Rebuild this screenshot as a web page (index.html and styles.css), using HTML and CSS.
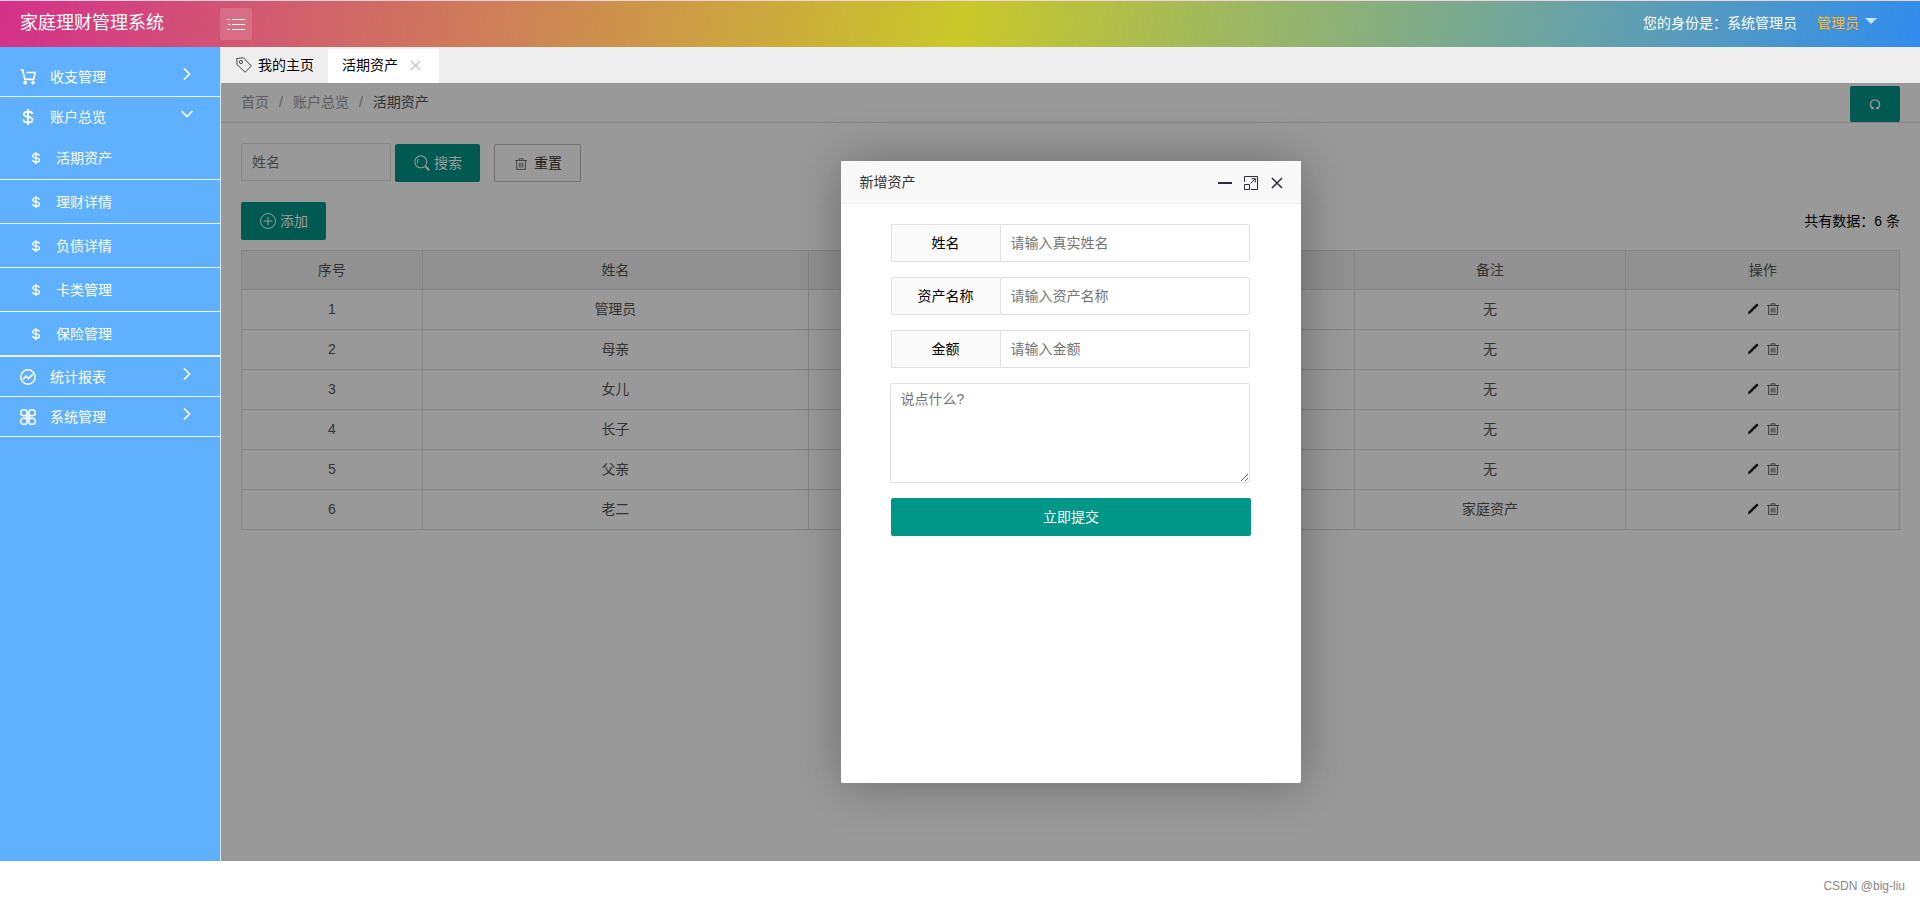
FILE: index.html
```html
<!DOCTYPE html>
<html lang="zh-CN">
<head>
<meta charset="utf-8">
<title>家庭理财管理系统</title>
<link rel="stylesheet" href="styles.css">
</head>
<body>
<svg class="sprite" aria-hidden="true">
  <symbol id="i-cart" viewBox="0 0 16 16"><path d="M0.5 1h2.2l2.2 9.400h8.800L15.200 3.500H6.500" fill="none" stroke="currentColor" stroke-width="1.700"/><circle cx="5.200" cy="13.600" r="1.900" fill="currentColor"/><circle cx="13" cy="13.600" r="1.900" fill="currentColor"/></symbol>
  <symbol id="i-dollar" viewBox="0 0 16 16"><path d="M12.4 5C12 3.200 10.400 2.500 8 2.500S3.800 3.500 3.800 5.200c0 3.800 8.800 1.600 8.800 5.500 0 1.900-1.900 2.900-4.600 2.900s-4.400-1-4.700-3M8 0v16" fill="none" stroke="currentColor" stroke-width="1.800"/></symbol>
  <symbol id="i-chart" viewBox="0 0 16 16"><circle cx="8" cy="8" r="7.200" fill="none" stroke="currentColor" stroke-width="1.500"/><path d="M3 10.500 6 7.200l2.600 2.300L13 5.200" fill="none" stroke="currentColor" stroke-width="1.700"/></symbol>
  <symbol id="i-clover" viewBox="0 0 16 16"><g fill="none" stroke="currentColor" stroke-width="1.500"><rect x=".8" y=".8" width="6.400" height="6" rx="2.800"/><rect x="8.800" y=".8" width="6.400" height="6" rx="2.800"/><rect x=".8" y="9.200" width="6.400" height="6" rx="2.800"/><rect x="8.800" y="9.200" width="6.400" height="6" rx="2.800"/></g><path d="M5.500 5.800h5v4.400h-5z" fill="currentColor" opacity=".85"/></symbol>
  <symbol id="i-right" viewBox="0 0 14 14"><path d="M4 1.500 9.500 7 4 12.500" fill="none" stroke="currentColor" stroke-width="1.700"/></symbol>
  <symbol id="i-down" viewBox="0 0 14 14"><path d="M1.500 4 7 9.500 12.500 4" fill="none" stroke="currentColor" stroke-width="1.700"/></symbol>
  <symbol id="i-list" viewBox="0 0 18 14"><path d="M5 2.500h13M5 7.500h13M5 12.500h13M0 2.500h3M1 7.500h2.500M0 12.500h3" stroke="currentColor"/></symbol>
  <symbol id="i-tag" viewBox="0 0 16 16"><path d="M.7 1.500 7.500.7l7.800 8.300-6.200 6.200L1 7.500z" fill="none" stroke="currentColor"/><circle cx="5" cy="5" r="1.600" fill="none" stroke="currentColor"/></symbol>
  <symbol id="i-close" viewBox="0 0 12 12"><path d="M1 1l10 10M11 1 1 11" stroke="currentColor" stroke-width="1.500"/></symbol>
  <symbol id="i-search" viewBox="0 0 16 16"><circle cx="6.800" cy="6.800" r="6" fill="none" stroke="currentColor" stroke-width="1.100"/><path d="M4.500 3.800a4 4 0 0 0-.8 4.500" fill="none" stroke="currentColor"/><path d="m11.500 11.500 3.700 3.700" stroke="currentColor" stroke-width="2.200"/></symbol>
  <symbol id="i-trash" viewBox="0 0 12 12"><path d="M0 2.500h12M4 2V.8h4V2M1.600 2.800v8.600h8.800V2.800M4.200 4.800v4.800M6 4.800v4.800M7.800 4.800v4.800" fill="none" stroke="currentColor" stroke-width=".9"/></symbol>
  <symbol id="i-plus" viewBox="0 0 16 16"><circle cx="8" cy="8" r="7.500" fill="none" stroke="currentColor"/><path d="M8 3.800v8.400M3.800 8h8.400" stroke="currentColor"/></symbol>
  <symbol id="i-edit" viewBox="0 0 12 12"><path d="M.8 11.200 1.500 8.500 9 1.200q1-1 1.900-.2t0 1.900L3.500 10.300z" fill="currentColor"/></symbol>
  <symbol id="i-refresh" viewBox="0 0 12 12"><path d="M3.800 10.500A4.600 4.600 0 1 1 8.200 10.500M2.300 10.500h1.900V9M9.700 10.500H7.800V9" fill="none" stroke="currentColor" stroke-width="1.400"/></symbol>
  <symbol id="i-max" viewBox="0 0 14 14"><path d="M.5 6V.5h13v13H7M.5 8.500h5v5h-5zM6.500 7.500 11 3M7.500 2.700h3.800v3.800" fill="none" stroke="currentColor"/></symbol>
</svg>

<header class="header">
  <h1 class="logo">家庭理财管理系统</h1>
  <button class="fold" type="button" aria-label="菜单"><svg class="icon-list"><use href="#i-list"/></svg></button>
  <div class="identity">您的身份是：系统管理员</div>
  <a class="account" href="#">管理员<span class="caret"></span></a>
</header>

<div class="body">
  <nav class="side">
    <a class="item" href="#"><svg class="icon16"><use href="#i-cart"/></svg><span>收支管理</span><svg class="arrow"><use href="#i-right"/></svg></a>
    <div class="group">
      <a class="item item-open" href="#"><svg class="icon16"><use href="#i-dollar"/></svg><span>账户总览</span><svg class="arrow"><use href="#i-down"/></svg></a>
      <a class="sub" href="#"><svg class="icon12"><use href="#i-dollar"/></svg><span>活期资产</span></a>
      <a class="sub" href="#"><svg class="icon12"><use href="#i-dollar"/></svg><span>理财详情</span></a>
      <a class="sub" href="#"><svg class="icon12"><use href="#i-dollar"/></svg><span>负债详情</span></a>
      <a class="sub" href="#"><svg class="icon12"><use href="#i-dollar"/></svg><span>卡类管理</span></a>
      <a class="sub" href="#"><svg class="icon12"><use href="#i-dollar"/></svg><span>保险管理</span></a>
    </div>
    <a class="item" href="#"><svg class="icon16"><use href="#i-chart"/></svg><span>统计报表</span><svg class="arrow"><use href="#i-right"/></svg></a>
    <a class="item" href="#"><svg class="icon16"><use href="#i-clover"/></svg><span>系统管理</span><svg class="arrow"><use href="#i-right"/></svg></a>
  </nav>

  <main class="main">
    <div class="tabs">
      <a class="tab" href="#"><svg class="icon16 tag"><use href="#i-tag"/></svg>我的主页</a>
      <a class="tab tab-on" href="#">活期资产<svg class="tab-close"><use href="#i-close"/></svg></a>
    </div>

    <section class="page">
      <div class="crumbs">
        <div class="trail"><a href="#">首页</a><i>/</i><a href="#">账户总览</a><i>/</i><a class="here" href="#">活期资产</a></div>
        <button class="refresh" type="button" aria-label="刷新"><svg class="icon12"><use href="#i-refresh"/></svg></button>
      </div>
      <div class="content">
        <form class="search">
          <input class="field" type="text" placeholder="姓名" aria-label="姓名">
          <button class="btn" type="button"><svg class="icon16"><use href="#i-search"/></svg>搜索</button>
          <button class="btn btn-plain" type="button"><svg class="icon12"><use href="#i-trash"/></svg>重置</button>
        </form>
        <div class="toolbar">
          <button class="btn" type="button"><svg class="icon16"><use href="#i-plus"/></svg>添加</button>
          <span>共有数据：6 条</span>
        </div>
        <table class="grid">
          <colgroup><col class="c-no"><col class="c-name"><col class="c-asset"><col class="c-note"><col class="c-act"></colgroup>
          <thead><tr><th>序号</th><th>姓名</th><td></td><th>备注</th><th>操作</th></tr></thead>
          <tbody>
            <tr><td>1</td><td>管理员</td><td></td><td>无</td><td><div class="acts"><a href="#" aria-label="编辑"><svg class="icon12 edit"><use href="#i-edit"/></svg></a><a href="#" aria-label="删除"><svg class="icon12"><use href="#i-trash"/></svg></a></div></td></tr>
            <tr><td>2</td><td>母亲</td><td></td><td>无</td><td><div class="acts"><a href="#" aria-label="编辑"><svg class="icon12 edit"><use href="#i-edit"/></svg></a><a href="#" aria-label="删除"><svg class="icon12"><use href="#i-trash"/></svg></a></div></td></tr>
            <tr><td>3</td><td>女儿</td><td></td><td>无</td><td><div class="acts"><a href="#" aria-label="编辑"><svg class="icon12 edit"><use href="#i-edit"/></svg></a><a href="#" aria-label="删除"><svg class="icon12"><use href="#i-trash"/></svg></a></div></td></tr>
            <tr><td>4</td><td>长子</td><td></td><td>无</td><td><div class="acts"><a href="#" aria-label="编辑"><svg class="icon12 edit"><use href="#i-edit"/></svg></a><a href="#" aria-label="删除"><svg class="icon12"><use href="#i-trash"/></svg></a></div></td></tr>
            <tr><td>5</td><td>父亲</td><td></td><td>无</td><td><div class="acts"><a href="#" aria-label="编辑"><svg class="icon12 edit"><use href="#i-edit"/></svg></a><a href="#" aria-label="删除"><svg class="icon12"><use href="#i-trash"/></svg></a></div></td></tr>
            <tr><td>6</td><td>老二</td><td></td><td>家庭资产</td><td><div class="acts"><a href="#" aria-label="编辑"><svg class="icon12 edit"><use href="#i-edit"/></svg></a><a href="#" aria-label="删除"><svg class="icon12"><use href="#i-trash"/></svg></a></div></td></tr>
          </tbody>
        </table>
      </div>

      <div class="shade">
        <div class="dialog" role="dialog" aria-labelledby="dlg-title">
          <div class="dialog-head">
            <h2 class="dialog-title" id="dlg-title">新增资产</h2>
            <button class="win" type="button" aria-label="最小化"><span class="min"></span></button>
            <button class="win" type="button" aria-label="最大化"><svg class="icon14"><use href="#i-max"/></svg></button>
            <button class="win" type="button" aria-label="关闭"><svg class="icon12"><use href="#i-close"/></svg></button>
          </div>
          <form class="form">
            <div class="row"><label class="label" for="f-name">姓名</label><input class="field" id="f-name" type="text" placeholder="请输入真实姓名"></div>
            <div class="row"><label class="label" for="f-asset">资产名称</label><input class="field" id="f-asset" type="text" placeholder="请输入资产名称"></div>
            <div class="row"><label class="label" for="f-money">金额</label><input class="field" id="f-money" type="text" placeholder="请输入金额"></div>
            <textarea class="field note" placeholder="说点什么?" aria-label="备注"></textarea>
            <button class="btn submit" type="button">立即提交</button>
          </form>
        </div>
      </div>
    </section>
  </main>
</div>
<footer class="footer">CSDN @big-liu</footer>
</body>
</html>
```

FILE: styles.css
```css
* { box-sizing: border-box; }
body {
  margin: 0;
  min-height: 100vh;
  display: flex;
  flex-direction: column;
  background: #fff;
  color: #000;
  font: 14px/24px "Liberation Sans", "Noto Sans CJK SC", sans-serif;
}
a { color: inherit; text-decoration: none; }
button, input, textarea { font: inherit; }
button { cursor: pointer; }
svg { flex: none; display: block; }
.sprite { position: absolute; width: 0; height: 0; }
.icon16 { width: 16px; height: 16px; }
.icon14 { width: 14px; height: 14px; }
.icon12 { width: 12px; height: 12px; }

.header {
  height: 47px;
  flex: none;
  display: flex;
  align-items: center;
  padding: 0 43px 2px 20px;
  border-top: 1px solid #f3d3e2;
  background: linear-gradient(100deg, #d5308a, #c9c829 50%, #318dee);
  color: #fff;
}
.logo { width: 200px; margin: 0; font-size: 18px; font-weight: 400; }
.fold {
  width: 32px;
  height: 32px;
  margin-top: 2px;
  padding: 0;
  border: 0;
  border-radius: 2px;
  display: grid;
  place-items: center;
  background: rgba(255, 255, 255, .14);
  color: #fff;
}
.icon-list { width: 18px; height: 14px; }
.identity { margin-left: auto; }
.account { display: flex; align-items: center; gap: 6px; margin-left: 20px; color: #ffb825; }
.caret { border: 6px solid transparent; border-top-color: #c4e6ff; border-bottom: 0; margin-bottom: 4px; }

.body { flex: 1; display: flex; }
.side {
  width: 221px;
  flex: none;
  padding-top: 10px;
  border-right: 1px solid #d9ecff;
  background: #5fb0ff;
  color: #fff;
}
.item {
  height: 40px;
  display: flex;
  align-items: center;
  gap: 14px;
  padding: 0 26px 0 20px;
  border-bottom: 1px solid #eaf5ff;
}
.item-open { height: 39px; border-bottom: 0; }
.arrow { width: 14px; height: 14px; margin: 0 0 6px auto; }
.group { border-bottom: 1px solid #eaf5ff; }
.sub {
  height: 44px;
  display: flex;
  align-items: center;
  gap: 14px;
  padding-left: 30px;
  border-bottom: 1px solid #eaf5ff;
}

.main { flex: 1; min-width: 0; display: flex; flex-direction: column; }
.tabs { height: 36px; flex: none; display: flex; background: #eeeeef; }
.tab { display: flex; align-items: center; gap: 6px; padding: 0 14px 0 15px; }
.tab-on { gap: 12px; padding: 0 18px 2px 14px; margin-top: 2px; background: #fff; }
.tag { color: #444; }
.tab-close { width: 11px; height: 11px; color: #c4c4c4; }

.page { flex: 1; position: relative; background: #fff; }
.crumbs {
  height: 40px;
  display: flex;
  align-items: center;
  justify-content: space-between;
  padding: 0 20px;
  border-bottom: 1px solid #dcdcdc;
}
.trail { padding-bottom: 2px; color: #999; }
.trail i { margin: 0 10px; font-style: normal; }
.trail .here { color: #555; }
.refresh {
  width: 50px;
  height: 36px;
  margin-top: 3px;
  padding: 0;
  border: 0;
  border-radius: 2px;
  display: grid;
  place-items: center;
  background: #009688;
  color: #fff;
}
.content { padding: 20px; }
.search { display: flex; gap: 4px; }
.search .field { width: 150px; }
.search .btn { margin-top: 1px; }
.field {
  height: 38px;
  min-width: 0;
  padding: 0 10px;
  border: 1px solid #e0e0e0;
  border-radius: 2px;
  background: #fff;
  color: #333;
}
.field::placeholder { color: #757575; opacity: 1; }
.btn {
  height: 38px;
  padding: 0 18px 0 19px;
  border: 0;
  border-radius: 2px;
  display: flex;
  align-items: center;
  justify-content: center;
  gap: 4px;
  background: #009688;
  color: #fff;
}
.search .btn-plain {
  margin-left: 10px;
  padding: 0 18px 0 20px;
  gap: 7px;
  border: 1px solid #bbb;
  background: #fff;
  color: #333;
}
.btn-plain .icon12 { margin-top: 2px; color: #666; }
.toolbar { display: flex; align-items: center; justify-content: space-between; padding: 20px 0 10px; }

.grid { width: 100%; table-layout: fixed; border-collapse: collapse; color: #555; text-align: center; }
.grid th, .grid td { height: 40px; padding: 0 0 1px; border: 1px solid #dcdcdc; font-weight: 400; }
.grid thead { background: #f2f2f2; }
.grid thead th, .grid thead td { height: 39px; }
.c-no { width: 10.9%; }
.c-name { width: 23.3%; }
.c-asset { width: 32.9%; }
.c-note { width: 16.4%; }
.acts { display: flex; justify-content: center; gap: 8px; color: #555; }
.edit { color: #222; }

.shade {
  position: absolute;
  inset: 0;
  display: flex;
  align-items: center;
  justify-content: center;
  background: rgba(0, 0, 0, .4);
}
.dialog {
  width: 460px;
  height: 80%;
  border-radius: 2px;
  background: #fff;
  box-shadow: 1px 1px 50px rgba(0, 0, 0, .3);
}
.dialog-head {
  height: 43px;
  display: flex;
  align-items: center;
  gap: 12px;
  padding: 0 17px 0 19px;
  border-bottom: 1px solid #eee;
  background: #f8f8f8;
  color: #333;
}
.dialog-title { margin: 0 auto 0 0; font-size: 14px; font-weight: 400; }
.win { width: 14px; height: 14px; margin-top: 2px; padding: 0; border: 0; display: grid; place-items: center; background: none; color: #2d2c3b; }
.min { width: 14px; height: 2px; background: #2d2c3b; }
.form { display: flex; flex-direction: column; gap: 15px; padding: 20px 50px; }
.row { display: flex; padding-right: 1px; }
.row .field { flex: 1; border-radius: 0 2px 2px 0; }
.label {
  width: 109px;
  height: 38px;
  line-height: 36px;
  text-align: center;
  border: 1px solid #e2e2e2;
  border-right: 0;
  border-radius: 2px 0 0 2px;
  background: #fafafa;
}
.note { height: 100px; margin: 0 1px 0 -1px; padding: 3px 10px; resize: vertical; }
.submit { width: 100%; }

.footer {
  height: 41px;
  flex: none;
  display: flex;
  align-items: center;
  justify-content: flex-end;
  padding: 8px 15px 0;
  font-size: 12px;
  color: #888;
}
```
